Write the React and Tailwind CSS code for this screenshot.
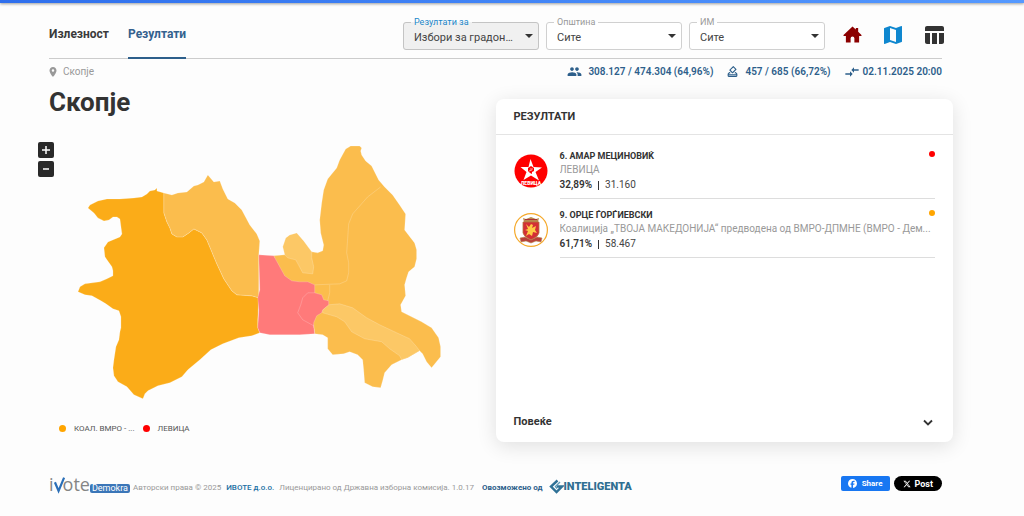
import { useState } from 'react';
import {
  MdPeople,
  MdOutlineHowToVote,
  MdCompareArrows,
  MdMap,
  MdTableChart,
  MdLocationOn,
} from 'react-icons/md';
import { FaFacebook, FaXTwitter } from 'react-icons/fa6';

const filters = [
  { id: 'type', label: 'Резултати за', options: ['Избори за градоначалник', 'Избори за совет'], active: true },
  { id: 'municipality', label: 'Општина', options: ['Сите'] },
  { id: 'station', label: 'ИМ', options: ['Сите'] },
];

const results = [
  {
    id: 6,
    name: '6. АМАР МЕЦИНОВИЌ',
    party: 'ЛЕВИЦА',
    percent: '32,89%',
    votes: '31.160',
    dot: 'bg-[#ff0000]',
    Logo: LevicaLogo,
  },
  {
    id: 9,
    name: '9. ОРЦЕ ЃОРЃИЕВСКИ',
    party: 'Коалиција „ТВОЈА МАКЕДОНИЈА“ предводена од ВМРО-ДПМНЕ (ВМРО - Дем...',
    percent: '61,71%',
    votes: '58.467',
    dot: 'bg-[#ffa500]',
    Logo: VmroLogo,
  },
];

const regions = [
  {
    id: 'west',
    fill: '#fbac18',
    d: 'M88 208L90 205L94 203L98 201L107 199L120 199L134 198L142 197L147 194L150 191L155 190L157 188L157 191L164 193L164 213L167 222L170 228L172 234L177 237L183 237L189 233L194 229L202 233L207 240L212 252L217 264L224 279L232 291L237 295L252 296L259 298L258 320L258 328L260 333L252 336L239 338L223 344L211 350L200 360L188 370L182 377L170 383L158 386L148 391L145 394L143 399L134 395L127 387L118 382L114 376L113 368L114 360L116 347L119 340L120 332L121 328L121 317L119 311L113 309L106 304L101 301L92 296L85 295L78 292L80 287L85 284L100 282L107 279L113 276L113 271L112 267L107 260L105 257L104 248L108 242L120 237L122 234L120 219L117 217L113 217L109 220L104 221L98 218L94 213Z',
  },
  {
    id: 'northwest',
    fill: '#fbbd4d',
    d: 'M164 193L172 195L178 193L187 192L194 186L198 185L204 182L208 175L214 182L220 181L223 189L228 199L235 203L242 210L250 225L257 234L260 241L259 255L259 280L259 298L252 296L237 295L232 291L224 279L217 264L212 252L207 240L202 233L194 229L189 233L183 237L177 237L172 234L170 228L167 222L164 213Z',
  },
  {
    id: 'northeast',
    fill: '#fbbd4d',
    d: 'M274 256L285 255L312 252L318 253L323 251L324 245L321 233L320 220L322 203L324 190L328 179L337 168L340 160L346 149L351 146L360 146L362 148L361 151L362 155L366 161L372 166L375 172L379 180L385 187L393 195L400 205L406 214L405 230L415 243L417 250L417 259L415 267L409 272L407 278L405 285L406 296L401 305L402 312L410 316L422 322L432 328L439 338L441 347L441 357L432 368L427 362L423 354L420 351L408 358L402 360L392 365L385 373L383 381L381 388L373 387L365 383L364 370L363 360L358 355L350 352L344 354L333 355L328 349L328 338L323 335L315 334L314 326L300 290L280 275Z',
  },
  {
    id: 'cair',
    fill: '#fcc866',
    d: 'M285 255L283 247L286 238L290 235L297 233L304 241L312 252L312 258L314 267L313 274L303 273L296 260L288 258Z',
  },
  {
    id: 'aerodrom',
    fill: '#fcc866',
    d: 'M329 305L340 304L353 308L367 318L380 325L397 333L410 339L417 347L420 351L408 358L402 360L400 356L390 349L382 342L365 339L352 332L345 322L337 317L323 313L323 310Z',
  },
  {
    id: 'centar',
    fill: '#ff7a7a',
    d: 'M259 255L274 256L285 276L292 281L300 282L308 282L315 285L315 293L322 295L324 300L329 301L329 305L323 310L322 313L317 316L314 323L314 327L315 334L300 335L270 335L260 333L258 328L259 310L258 298L260 290Z',
  },
];

const borders = [
  'M315 293L308 293L303 298L301 305L298 313L303 320L314 326',
  'M381 187L368 197L353 214L349 224L347 253L349 263L349 273L347 281L340 284L315 285',
  'M330 285L330 293L328 301',
];

function LevicaLogo() {
  return (
    <svg viewBox="0 0 34 34" className="mt-[5px] size-[34px] shrink-0" role="img" aria-label="Левица">
      <circle cx="17" cy="17" r="16.5" fill="#ff0000" />
      <path d="M16.500 5L19.500 13L28 13.500L21.500 18L25 26.500L17 21.500L9.500 26L12.500 18L6.500 13H14.500Z" fill="#fff" />
      <path d="M14 14L17 12L20 14L20 17L18 18L18 20L16 19L14 17Z" fill="#f00" />
      <path d="M16 15H19M15 17L18 16" stroke="#fff" strokeWidth=".6" />
      <text x="17" y="31" textAnchor="middle" fill="#fff" fontSize="5" fontWeight="900" fontFamily="Roboto, sans-serif">
        ЛЕВИЦА
      </text>
    </svg>
  );
}

function VmroLogo() {
  return (
    <svg viewBox="0 0 34 34" className="mt-[5px] size-[34px] shrink-0" role="img" aria-label="ВМРО-ДПМНЕ">
      <circle cx="17" cy="17" r="16.4" fill="#fff" stroke="#f5a92a" strokeWidth="1.2" />
      <path d="M9 5L12 6L17 4L22 6L25 5L24 9H10Z" fill="#b98a4d" />
      <path d="M11 6.500H23" stroke="#a83232" strokeWidth="1" />
      <path d="M9 9H25V20Q24 24 17 27Q10 24 9 20Z" fill="#d32f35" stroke="#b5763c" strokeWidth=".8" />
      <path d="M12 11L15 14L17 11L19 12L18 15L22 13L21 17L23 20L19 19L18 23L15 21L12 23L14 18L11 17L14 16Z" fill="#ffca45" />
      <path d="M6 25L11 24L17 27L23 24L28 25L27 29L22 28L17 30L12 28L7 29Z" fill="#b9403b" stroke="#b98a4d" strokeWidth=".6" />
    </svg>
  );
}

function HomeIcon() {
  return (
    <svg viewBox="0 0 20 18" className="h-[17px] w-[19px]" fill="currentColor" aria-hidden="true">
      <path d="M10 0.500L13.500 3.800V2H16V6L19.500 9.500V10.500H17V17.500H12V13Q12 11 10 11Q8 11 8 13V17.500H3V10.500H.5V9.500Z" />
    </svg>
  );
}

function FilterSelect({ filter }) {
  return (
    <fieldset
      className={`relative h-[35px] w-[136px] min-w-0 rounded-[3px] border px-[7px] pb-[3px] ${
        filter.active ? 'border-[#c4c4c4] bg-[#f0f0f0]' : 'border-[#d0d0d0] bg-white'
      }`}
    >
      <legend className={`px-[3px] text-[9px] leading-[14px] ${filter.active ? 'text-[#1b87c9]' : 'text-[#999]'}`}>
        <label htmlFor={filter.id} className="block">{filter.label}</label>
      </legend>
      <select
        id={filter.id}
        className="block h-[17px] w-full appearance-none truncate bg-transparent pl-[3px] pr-4 text-[11px] leading-4 text-[#444] outline-none"
      >
        {filter.options.map((o) => (
          <option key={o}>{o}</option>
        ))}
      </select>
      <svg viewBox="0 0 8 4" className="pointer-events-none absolute right-[5px] bottom-[11px] h-1 w-2" aria-hidden="true">
        <path d="M0 0H8L4 4Z" fill="#333" />
      </svg>
    </fieldset>
  );
}

function Header() {
  return (
    <header className="mx-[11px] flex h-[56px] items-stretch border-b border-[#ccc]">
      <nav className="flex gap-[19px] text-xs leading-4 font-bold">
        <a href="#turnout" className="flex items-center pt-1.5 text-[#3a3a3a]">Излезност</a>
        <a href="#results" className="-mb-px flex items-center border-b-2 border-[#2d5f8b] pt-[7px] text-[#34618e]">
          Резултати
        </a>
      </nav>
      <div className="ml-auto flex items-end gap-[7px] pb-2">
        {filters.map((f) => (
          <FilterSelect key={f.id} filter={f} />
        ))}
      </div>
      <div className="-mr-1 ml-[15px] flex items-center gap-[17px] pt-2">
        <button aria-label="Почетна" className="flex size-6 items-center justify-center text-[#8b0000]"><HomeIcon /></button>
        <button aria-label="Мапа" className="text-[#0f87cf]"><MdMap size={24} /></button>
        <button aria-label="Табела" className="text-[#333]"><MdTableChart size={24} /></button>
      </div>
    </header>
  );
}

function InfoRow() {
  return (
    <div className="mx-[11px] flex h-[27px] items-center pb-0.5 text-[10px] leading-4">
      <a href="#skopje" className="flex items-center gap-1 text-[#999]">
        <MdLocationOn size={12} className="-ml-0.5" />
        Скопје
      </a>
      <ul className="ml-auto flex items-center gap-[13px] font-semibold text-[#2d5f8b]">
        <li className="flex items-center gap-1.5"><MdPeople size={15} />308.127 / 474.304 (64,96%)</li>
        <li className="flex items-center gap-1.5"><MdOutlineHowToVote size={13} />457 / 685 (66,72%)</li>
        <li className="flex items-center gap-[3px]"><MdCompareArrows size={16} />02.11.2025 20:00</li>
      </ul>
    </div>
  );
}

function MapPanel() {
  const [zoom, setZoom] = useState(1);
  const w = 426 / zoom;
  const h = 264 / zoom;
  const viewBox = `${70 + (426 - w) / 2} ${140 + (264 - h) / 2} ${w} ${h}`;

  return (
    <section className="min-w-0">
      <h1 className="mx-[11px] text-[26px] leading-8 font-bold text-[#333]">Скопје</h1>
      <div className="mt-[22px] flex gap-4">
        <div className="flex flex-col gap-[3px] pt-0.5">
          <button
            aria-label="Зголеми"
            onClick={() => setZoom((z) => Math.min(z * 1.25, 4))}
            className="flex size-4 items-center justify-center rounded-xs bg-[#292929] text-white"
          >
            <svg viewBox="0 0 8 8" className="size-2"><path d="M4 0V8M0 4H8" stroke="currentColor" strokeWidth="1.500" /></svg>
          </button>
          <button
            aria-label="Намали"
            onClick={() => setZoom((z) => Math.max(z / 1.25, 1))}
            className="flex size-4 items-center justify-center rounded-xs bg-[#292929] text-white"
          >
            <svg viewBox="0 0 8 8" className="size-2"><path d="M1 4H7" stroke="currentColor" strokeWidth="1.500" /></svg>
          </button>
        </div>
        <svg viewBox={viewBox} className="min-w-0 flex-1" role="img" aria-label="Мапа на Скопје">
          {regions.map((r) => (
            <path key={r.id} d={r.d} fill={r.fill} stroke="#fff" strokeOpacity=".2" strokeWidth="1" strokeLinejoin="round" />
          ))}
          {borders.map((d) => (
            <path key={d} d={d} fill="none" stroke="#fff" strokeOpacity=".2" strokeWidth="1" />
          ))}
        </svg>
      </div>
      <ul className="mx-[21px] mt-[19px] flex gap-[8px] text-[8px] leading-3 text-[#555]">
        <li className="flex items-center gap-2">
          <span className="size-[7px] rounded-full bg-[#ffa500]" />
          <span>КОАЛ. ВМРО - ...</span>
        </li>
        <li className="flex items-center gap-2">
          <span className="size-[7px] rounded-full bg-[#ff0000]" />
          <span>ЛЕВИЦА</span>
        </li>
      </ul>
    </section>
  );
}

function ResultRow({ result }) {
  const { Logo } = result;
  return (
    <li className="flex items-start gap-3">
      <Logo />
      <div className="min-w-0 flex-1 border-b border-[#ddd] pb-[5px]">
        <div className="flex items-start justify-between">
          <h3 className="text-[9px] leading-[14px] font-bold text-[#333]">{result.name}</h3>
          <span className={`mt-0.5 size-1.5 rounded-full ${result.dot}`} />
        </div>
        <p className="truncate text-[10px] leading-[14px] text-[#999]">{result.party}</p>
        <p className="flex items-center text-[10px] leading-4 text-[#444]">
          <strong className="font-semibold text-[#333]">{result.percent}</strong>
          <span className="mx-[6px] h-[9px] w-px bg-[#333]" />
          {result.votes}
        </p>
      </div>
    </li>
  );
}

function ResultsCard() {
  return (
    <section className="mt-[13px] flex min-h-[343px] min-w-0 flex-col rounded-lg bg-white shadow-[0_4px_20px_rgba(0,0,0,0.12)]">
      <h2 className="border-b border-[#e4e4e4] px-[18px] pt-[10px] pb-[9px] text-[11px] leading-4 font-bold text-[#333]">
        РЕЗУЛТАТИ
      </h2>
      <ul className="flex flex-col gap-[9px] px-[18px] pt-[14px]">
        {results.map((r) => (
          <ResultRow key={r.id} result={r} />
        ))}
      </ul>
      <button className="mt-auto flex items-center justify-between px-[18px] pb-[11px] text-[11px] leading-[18px] font-bold text-[#333]">
        Повеќе
        <svg viewBox="0 0 14 14" className="size-[14px]" aria-hidden="true">
          <path d="M3 5.500L7 9.500L11 5.500" fill="none" stroke="#333" strokeWidth="1.800" />
        </svg>
      </button>
    </section>
  );
}

function Footer() {
  return (
    <footer className="mx-[11px] mt-[31px] flex items-center text-[8px] leading-3 text-[#999]">
      <a href="#ivote" className="flex items-end" aria-label="iVote Demokra">
        <span className="flex items-end font-['Open_Sans',sans-serif] text-lg leading-5 font-medium text-[#858585]">
          i
          <svg viewBox="0 0 12 18" className="-mr-0.5 h-[18px] w-[11px]" aria-hidden="true">
            <path d="M1 6L5 15.500L11 1" fill="none" stroke="#2b6fb7" strokeWidth="2.400" />
          </svg>
          ote
        </span>
        <span className="mb-px rounded-xs bg-[#3b76b8] px-0.5 text-[9px] leading-[9px] text-white">Demokra</span>
      </a>
      <p className="ml-[3px] flex gap-[5px] pt-2">
        <span>Авторски права © 2025</span>
        <a href="#about" className="font-medium text-[#1a6fa3]">ИВОТЕ д.о.о.</a>
        <span>Лиценцирано од Државна изборна комисија. 1.0.17</span>
      </p>
      <a href="#inteligenta" className="ml-2 flex items-center pt-1.5 font-bold text-[#2d5f8b]">
        <span className="pt-0.5">Овозможено од</span>
        <svg viewBox="0 0 15 15" className="ml-1.5 size-[15px]" aria-hidden="true">
          <path d="M8.500 1.500L2 7.500L7.500 13L13 7.500H8" fill="none" stroke="#2f7196" strokeWidth="2.400" />
          <path d="M11 3L6.500 7.500L8 9.500" fill="none" stroke="#5a9ab8" strokeWidth="1.400" />
        </svg>
        <span className="text-[11px] font-black text-[#2f6f92]">INTELIGENTA</span>
      </a>
      <div className="ml-auto flex gap-1 font-bold text-white">
        <button className="flex h-[15px] items-center gap-[5px] rounded-xs bg-[#1877f2] px-[7px]">
          <FaFacebook size={9} />
          Share
        </button>
        <button className="flex h-[15px] items-center gap-1 rounded-full bg-black px-[9px] text-[9px]">
          <FaXTwitter size={8} />
          Post
        </button>
      </div>
    </footer>
  );
}

export default function App() {
  return (
    <div className="min-h-screen bg-[#fdfdfd] font-[Roboto,'Open_Sans',sans-serif]">
      <div className="h-[3px] bg-linear-to-r from-[#2f6fed] to-[#5599ff] shadow-[0_1px_3px_rgba(0,0,0,0.4)]" />
      <div className="pr-[71px] pl-[38px]">
        <Header />
        <InfoRow />
        <main className="grid grid-cols-2">
          <MapPanel />
          <ResultsCard />
        </main>
        <Footer />
      </div>
    </div>
  );
}
